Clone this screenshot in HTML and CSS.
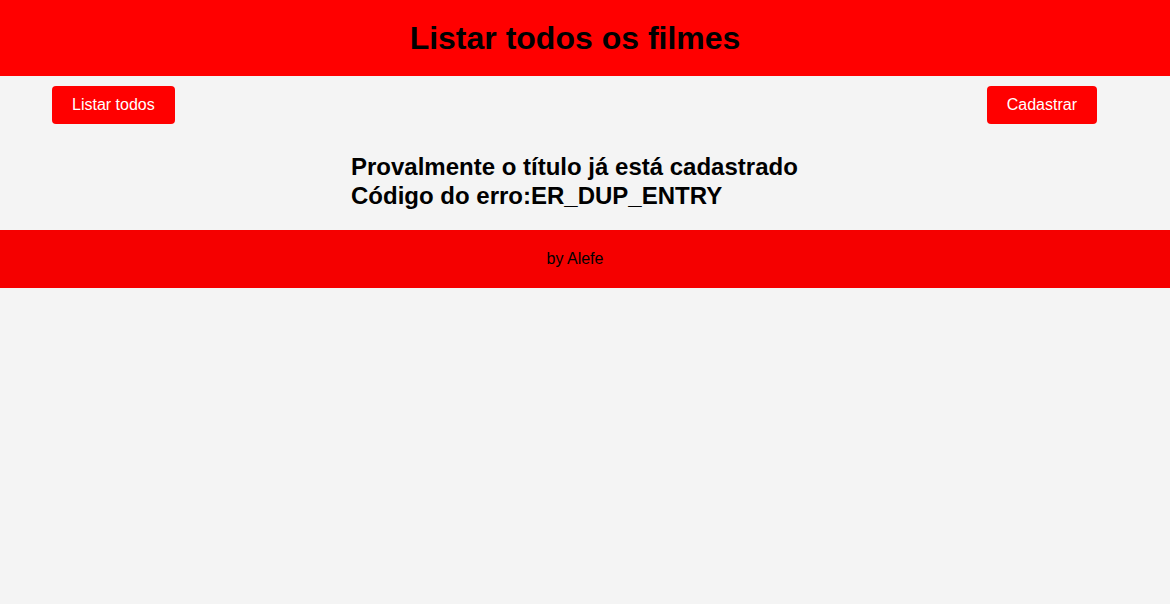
FILE: index.html
```html
<!DOCTYPE html>
<html lang="pt-BR">
<head>
<meta charset="utf-8">
<title>Listar todos os filmes</title>
<link rel="stylesheet" href="styles.css">
</head>
<body>
<header class="topo">
  <h1 class="titulo">Listar todos os filmes</h1>
</header>
<nav class="acoes">
  <a class="botao" href="#">Listar todos</a>
  <a class="botao" href="#">Cadastrar</a>
</nav>
<main class="conteudo">
  <h2 class="mensagem">Provalmente o título já está cadastrado<br>Código do erro:ER_DUP_ENTRY</h2>
</main>
<footer class="rodape">by Alefe</footer>
</body>
</html>
```
FILE: styles.css
```css
html, body {
  margin: 0;
  padding: 0;
}
body {
  background: #f4f4f4;
  font-family: "Liberation Sans", Arial, sans-serif;
  color: #000;
}
.topo {
  background: #ff0000;
  height: 76px;
  padding-right: 20px;
  display: flex;
  align-items: center;
  justify-content: center;
}
.titulo {
  margin: 0;
  font-size: 32px;
  font-weight: bold;
}
.acoes {
  display: flex;
  justify-content: space-between;
  padding: 10px 73px 0 52px;
}
.botao {
  display: flex;
  align-items: center;
  justify-content: center;
  height: 38px;
  padding: 0 20px;
  background: #ff0000;
  color: #fff;
  text-decoration: none;
  font-size: 16px;
  border-radius: 4px;
}
.conteudo {
  width: 40%;
  margin: 0 auto;
  padding: 28px 0 20px;
}
.mensagem {
  margin: 0;
  font-size: 24px;
  line-height: 29px;
  font-weight: bold;
}
.rodape {
  background: #f50000;
  height: 58px;
  padding-right: 20px;
  display: flex;
  align-items: center;
  justify-content: center;
  font-size: 16px;
}
```
